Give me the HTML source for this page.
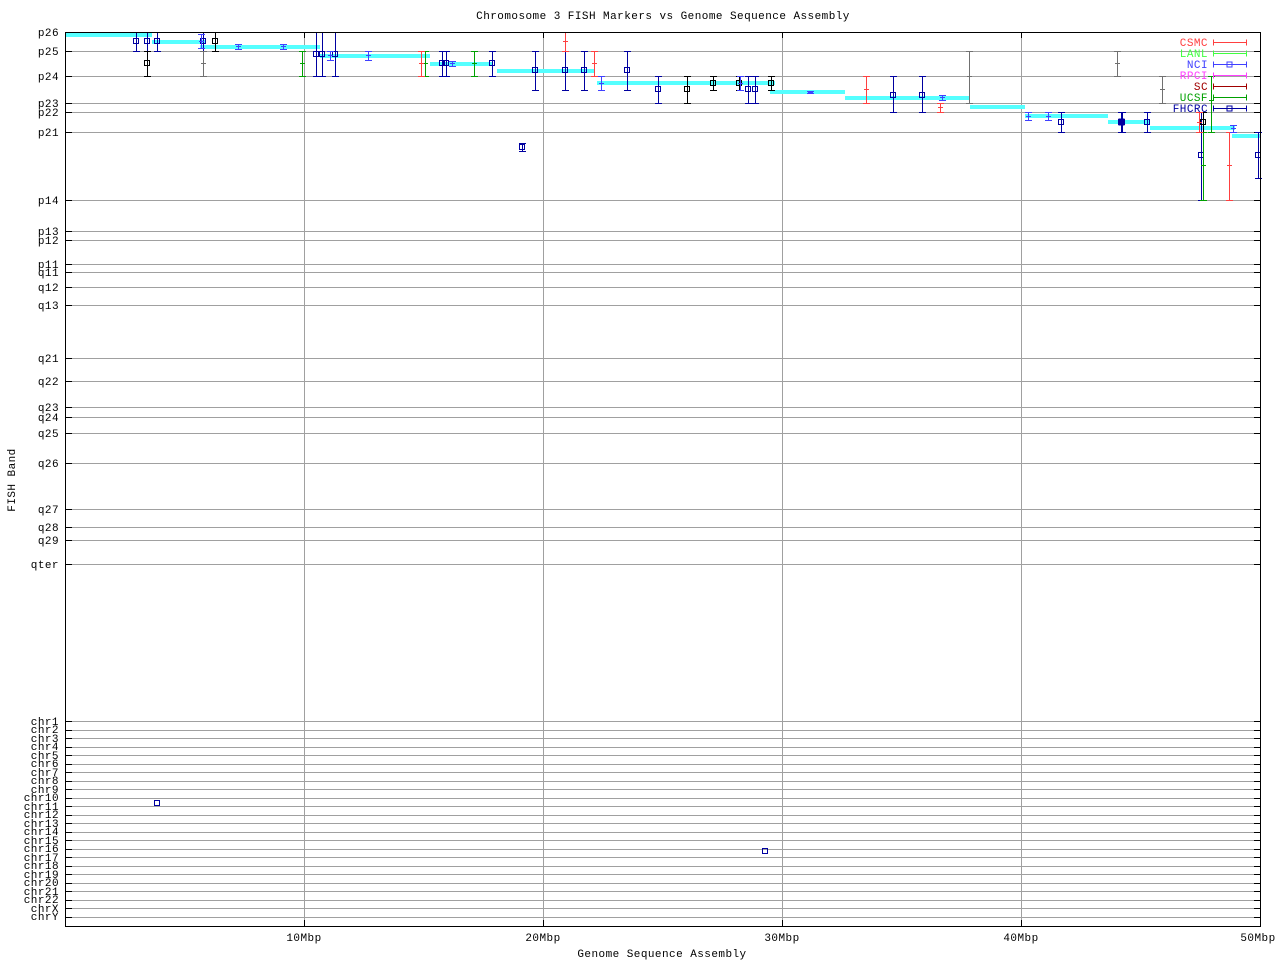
<!DOCTYPE html>
<html><head><meta charset="utf-8"><style>
html,body{margin:0;padding:0;background:#fff;width:1280px;height:960px;overflow:hidden}
svg text{font-family:"Liberation Mono",monospace;font-size:11px;letter-spacing:0.45px}
</style></head><body>
<svg id="s" width="1280" height="960" xmlns="http://www.w3.org/2000/svg" shape-rendering="crispEdges">
<g id="grid" stroke="#a0a0a0" stroke-width="1"></g>
<g id="cy" stroke="#55ffff" stroke-width="4"></g>
<g id="eb" fill="none" stroke-width="1"></g>
<rect x="65.5" y="32.5" width="1195" height="894" fill="none" stroke="#000"/>
<text x="663" y="19" text-anchor="middle">Chromosome 3 FISH Markers vs Genome Sequence Assembly</text>
<g text-anchor="end">
<text x="59" y="36">p26</text><text x="59" y="55">p25</text><text x="59" y="80">p24</text><text x="59" y="107">p23</text><text x="59" y="116">p22</text><text x="59" y="136">p21</text><text x="59" y="204">p14</text><text x="59" y="235">p13</text><text x="59" y="244">p12</text><text x="59" y="268">p11</text><text x="59" y="276">q11</text><text x="59" y="291">q12</text><text x="59" y="309">q13</text><text x="59" y="362">q21</text><text x="59" y="385">q22</text><text x="59" y="411">q23</text><text x="59" y="421">q24</text><text x="59" y="437">q25</text><text x="59" y="467">q26</text><text x="59" y="513">q27</text><text x="59" y="531">q28</text><text x="59" y="544">q29</text><text x="59" y="568">qter</text>
<text x="59" y="725">chr1</text><text x="59" y="733">chr2</text><text x="59" y="742">chr3</text><text x="59" y="750">chr4</text><text x="59" y="759">chr5</text><text x="59" y="767">chr6</text><text x="59" y="776">chr7</text><text x="59" y="784">chr8</text><text x="59" y="793">chr9</text><text x="59" y="801">chr10</text><text x="59" y="810">chr11</text><text x="59" y="818">chr12</text><text x="59" y="827">chr13</text><text x="59" y="835">chr14</text><text x="59" y="844">chr15</text><text x="59" y="852">chr16</text><text x="59" y="861">chr17</text><text x="59" y="869">chr18</text><text x="59" y="878">chr19</text><text x="59" y="886">chr20</text><text x="59" y="895">chr21</text><text x="59" y="903">chr22</text><text x="59" y="912">chrX</text><text x="59" y="920">chrY</text>
<text x="1208" y="46" fill="#ff4040">CSMC</text><text x="1208" y="57" fill="#40ff40">LANL</text><text x="1208" y="68" fill="#4040ff">NCI</text><text x="1208" y="79" fill="#ff40ff">RPCI</text><text x="1208" y="90" fill="#a00000">SC</text><text x="1208" y="101" fill="#00a000">UCSF</text><text x="1208" y="112" fill="#0000a0">FHCRC</text>
</g>
<g text-anchor="middle"><text x="304" y="941">10Mbp</text><text x="543" y="941">20Mbp</text><text x="782" y="941">30Mbp</text><text x="1021" y="941">40Mbp</text><text x="1258" y="941">50Mbp</text>
<text x="662" y="957">Genome Sequence Assembly</text></g>
<text transform="translate(15,480) rotate(-90)" text-anchor="middle">FISH Band</text>
</svg>
<script>
var NS="http://www.w3.org/2000/svg";
function el(p,t,a){var e=document.createElementNS(NS,t);for(var k in a)e.setAttribute(k,a[k]);document.getElementById(p).appendChild(e);return e}
var ys=[51,76,103,112,132,200,231,240,264,272,287,305,358,381,407,417,433,463,509,527,540,564];
for(var i=0;i<24;i++)ys.push(Math.round(721+i*8.52));
ys.forEach(function(y){el("grid","line",{x1:66,x2:1260,y1:y+.5,y2:y+.5});el("grid","line",{x1:66,x2:72,y1:y+.5,y2:y+.5,stroke:"#000"});el("grid","line",{x1:1254,x2:1260,y1:y+.5,y2:y+.5,stroke:"#000"})});
[304,543,782,1021].forEach(function(x){el("grid","line",{x1:x+.5,x2:x+.5,y1:33,y2:926});el("grid","line",{x1:x+.5,x2:x+.5,y1:33,y2:38,stroke:"#000"});el("grid","line",{x1:x+.5,x2:x+.5,y1:920,y2:926,stroke:"#000"})});
[[65,152,35],[152,205,42],[200,320,47],[320,430,56],[430,492,64],[497,595,71],[597,775,83],[770,845,92],[845,970,98],[970,1025,107],[1025,1108,116],[1108,1150,122],[1150,1235,128],[1232,1260,136]].forEach(function(s){el("cy","line",{x1:s[0],x2:s[1],y1:s[2],y2:s[2]})});
var C={b:"#0000a0",k:"#000000",g:"#00a000",r:"#ff4040",l:"#4040ff",m:"#ff40ff",gr:"#707070"};
function bar(x,t,b,m,c,sq){el("eb","line",{x1:x+.5,x2:x+.5,y1:t,y2:b,stroke:c});el("eb","line",{x1:x-3,x2:x+4,y1:t+.5,y2:t+.5,stroke:c});el("eb","line",{x1:x-3,x2:x+4,y1:b+.5,y2:b+.5,stroke:c});
 if(sq)el("eb","rect",{x:x-2.5,y:m-2.5,width:5,height:5,stroke:c});else el("eb","line",{x1:x-2,x2:x+3,y1:m+.5,y2:m+.5,stroke:c});}
[[136,32,51,41],[147,32,76,41],[157,32,51,41],[203,32,51,41],[316,32,76,54],[322,32,76,54],[335,32,76,54],[442,51,76,63],[446,51,76,63],[492,51,76,63],[535,51,90,70],[565,51,90,70],[584,51,90,70],[627,51,90,70],[658,76,103,89],[748,76,103,89],[755,76,103,89],[893,76,112,95],[922,76,112,95],[1061,112,132,122],[1121,112,132,122],[1122,112,132,122],[1147,112,132,122],[1201,112,200,155],[1258,132,178,155],[522,143,151,147]].forEach(function(a){bar(a[0],a[1],a[2],a[3],C.b,1)});
[[147,51,76,63,1],[215,32,51,41,1],[687,76,103,89,1],[713,76,90,83,1],[739,76,90,83,1],[771,76,90,83,1],[1203,112,132,122,1]].forEach(function(a){bar(a[0],a[1],a[2],a[3],C.k,a[4])});
[[969,51,103,76],[1117,51,76,63],[1162,76,103,89],[203,51,76,63]].forEach(function(a){bar(a[0],a[1],a[2],a[3],C.gr,0)});
[[302,51,76,63],[425,51,76,63],[474,51,76,63],[1203,132,200,165],[1211,76,132,100]].forEach(function(a){bar(a[0],a[1],a[2],a[3],C.g,0)});
[[421,51,76,63],[565,32,51,41],[594,51,76,63],[866,76,103,89],[940,103,112,107],[1229,132,200,165],[1199,112,132,122]].forEach(function(a){bar(a[0],a[1],a[2],a[3],C.r,0)});
[[238,44,49,46],[283,44,49,46],[330,51,60,55],[368,51,60,55],[601,76,90,83],[740,76,90,83],[810,91,93,92],[1028,112,120,116],[1048,112,120,116],[1233,125,132,128],[942,95,100,97],[452,61,66,63],[201,34,48,41]].forEach(function(a){bar(a[0],a[1],a[2],a[3],C.l,0)});
el("eb","rect",{x:1119,y:119,width:5,height:6,fill:C.b,stroke:C.b});
el("eb","rect",{x:154.5,y:800.5,width:5,height:5,stroke:C.b});
el("eb","rect",{x:762.5,y:848.5,width:5,height:5,stroke:C.b});
var L=[["r",42],["l2",53],["l",64],["m",75],["sc",86],["g",97],["b",108]];
var LC={r:"#ff4040",l2:"#40ff40",l:"#4040ff",m:"#ff40ff",sc:"#a00000",g:"#00a000",b:"#0000a0"};
L.forEach(function(a){var c=LC[a[0]],y=a[1]+.5;el("eb","line",{x1:1213,x2:1246,y1:y,y2:y,stroke:c});el("eb","line",{x1:1213.5,x2:1213.5,y1:y-3,y2:y+3,stroke:c});el("eb","line",{x1:1246.5,x2:1246.5,y1:y-3,y2:y+3,stroke:c});
 if(a[0]=="l"||a[0]=="b")el("eb","rect",{x:1227,y:y-2.5,width:5,height:5,stroke:c});});
</script>
</body></html>
